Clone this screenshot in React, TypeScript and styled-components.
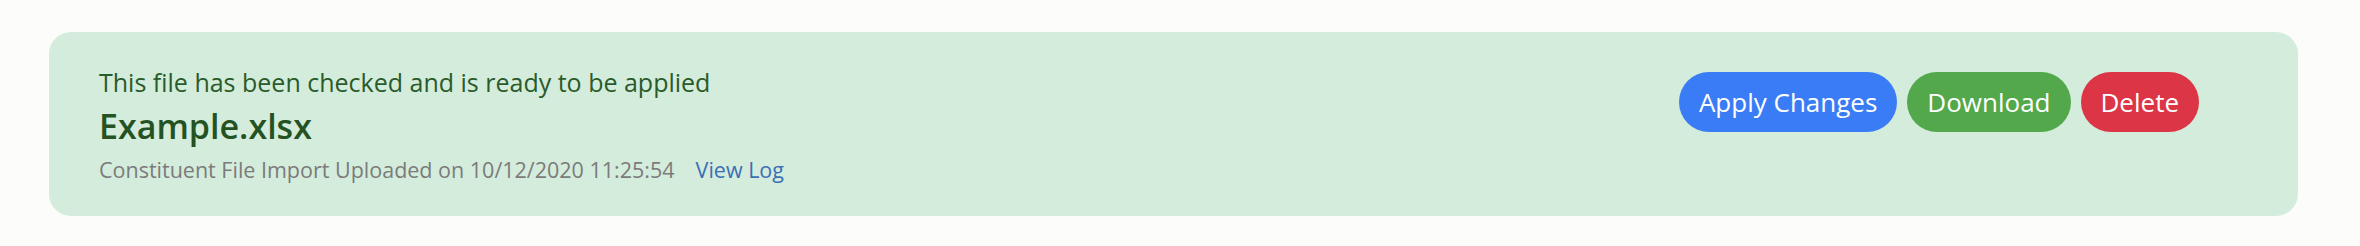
import React from 'react';
import styled, { createGlobalStyle } from 'styled-components';

const colors = {
  page: '#fcfcfb',
  card: '#d4ecdb', // success alert green
  text: '#2a5b2a',
  title: '#245223',
  muted: '#7b7b7b',
  link: '#3a6fb7',
  blue: '#397cf5',
  green: '#52a84a',
  red: '#dc3545',
};

const GlobalStyle = createGlobalStyle`
  body {
    margin: 0;
    background: ${colors.page};
    font-family: "Open Sans", "Noto Sans", sans-serif;
  }
`;

const Page = styled.div`
  padding: 32px 62px 30px 49px;
`;

const Card = styled.section`
  background: ${colors.card};
  border-radius: 22px;
  min-height: 184px;
  box-sizing: border-box;
  padding: 30px 99px 20px 50px;
  display: flex;
  justify-content: space-between;
  align-items: flex-start;
`;

const Info = styled.div`
  display: flex;
  flex-direction: column;
`;

const Status = styled.div`
  color: ${colors.text};
  font-size: 25px;
  line-height: 40px;
`;

const FileName = styled.h2`
  margin: 0;
  color: ${colors.title};
  font-size: 34px;
  font-weight: 600;
  line-height: 48px;
`;

const Meta = styled.div`
  color: ${colors.muted};
  font-size: 21.5px;
  line-height: 40px;
  display: flex;
  gap: 21px;
`;

const LogLink = styled.a`
  color: ${colors.link};
  text-decoration: none;
  cursor: pointer;
`;

const Actions = styled.div`
  display: flex;
  gap: 10px;
  margin-top: 10px;
`;

const Button = styled.button<{ $tone: string }>`
  background: ${(p) => p.$tone};
  color: #fff;
  border: none;
  border-radius: 30px;
  height: 60px;
  padding: 0 20px;
  font-family: inherit;
  font-size: 26px;
  cursor: pointer;
`;

export default function App() {
  return (
    <>
      <GlobalStyle />
      <Page>
        <Card>
          <Info>
            <Status>This file has been checked and is ready to be applied</Status>
            <FileName>Example.xlsx</FileName>
            <Meta>
              <span>Constituent File Import Uploaded on 10/12/2020 11:25:54</span>
              <LogLink>View Log</LogLink>
            </Meta>
          </Info>
          <Actions>
            <Button $tone={colors.blue}>Apply Changes</Button>
            <Button $tone={colors.green}>Download</Button>
            <Button $tone={colors.red}>Delete</Button>
          </Actions>
        </Card>
      </Page>
    </>
  );
}
